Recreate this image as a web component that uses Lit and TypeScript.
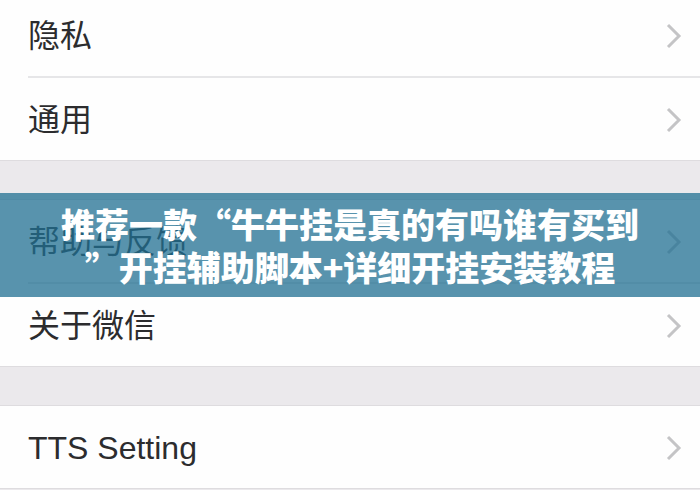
import { LitElement, html, css } from "lit";
import { customElement, property } from "lit/decorators.js";

@customElement("setting-row")
class SettingRow extends LitElement {
  @property() label = "";

  static styles = css`
    :host {
      display: block;
    }
    .row {
      display: flex;
      align-items: center;
      justify-content: space-between;
      height: 80px;
      padding: 2px 18px 0 28px;
      color: #2c2c2e;
      font-size: 32px;
      line-height: 40px;
      text-decoration: none;
    }
    .chevron {
      width: 16px;
      height: 26px;
      fill: none;
      stroke: #c4c4c6;
      stroke-width: 3;
    }
  `;

  render() {
    return html`<a class="row" href="#">
      <span>${this.label}</span>
      <svg class="chevron" viewBox="0 0 16 26" aria-hidden="true">
        <path d="M2 2 L13 13 L2 24" />
      </svg>
    </a>`;
  }
}

@customElement("app-root")
class AppRoot extends LitElement {
  groups = [["隐私", "通用"], ["帮助与反馈", "关于微信"], ["TTS Setting"]];

  static styles = css`
    :host {
      display: block;
      position: relative;
      height: 100vh;
      overflow: hidden;
      background: #ebe9ec;
      font-family: "Liberation Sans", "Noto Sans CJK SC", sans-serif;
    }
    .settings {
      display: flex;
      flex-direction: column;
      gap: 38px;
      margin-top: -7px;
    }
    .group {
      margin: 0;
      padding: 0;
      list-style: none;
      background: #fefefe;
      border-top: 1px solid #dedcdf;
      border-bottom: 1px solid #dedcdf;
    }
    .item + .item::before {
      content: "";
      display: block;
      height: 2px;
      margin-left: 28px;
      background: #e6e6e8;
    }
    .banner {
      position: absolute;
      inset: 0;
      display: flex;
      align-items: center;
    }
    .title {
      flex: 1;
      margin: 0;
      padding: 9px 0;
      background: rgba(32, 111, 145, 0.75);
      color: #fff;
      font-family: "Noto Sans CJK SC", sans-serif;
      font-size: 34px;
      font-weight: 900;
      line-height: 43px;
      text-align: center;
    }
  `;

  render() {
    return html`
      <nav class="settings">
        ${this.groups.map(
          (group) => html`<ul class="group">
            ${group.map(
              (label) => html`<li class="item">
                <setting-row label=${label}></setting-row>
              </li>`
            )}
          </ul>`
        )}
      </nav>
      <div class="banner">
        <h1 class="title" lang="zh-CN">
          推荐一款“牛牛挂是真的有吗谁有买到<br />”开挂辅助脚本+详细开挂安装教程
        </h1>
      </div>
    `;
  }
}
